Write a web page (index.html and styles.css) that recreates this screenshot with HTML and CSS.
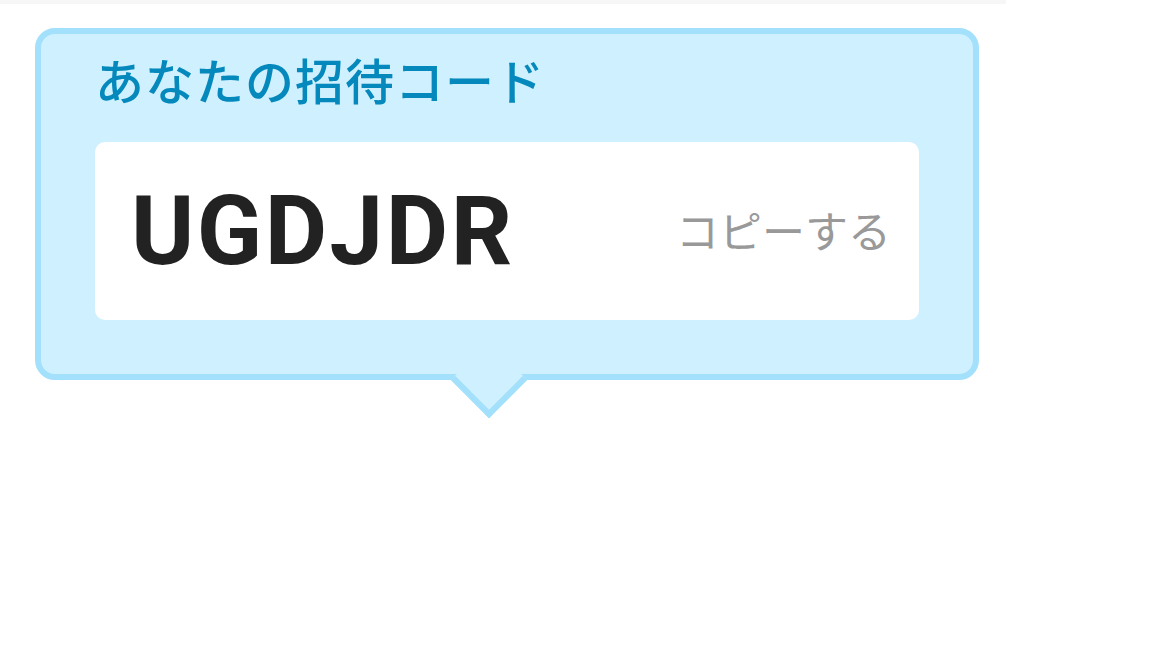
FILE: index.html
```html
<!DOCTYPE html>
<html lang="ja">
<head>
<meta charset="utf-8">
<link rel="stylesheet" href="styles.css">
</head>
<body>
<div class="topbar"></div>
<div class="bubble">
  <div class="title">あなたの招待コード</div>
  <div class="codebox">
    <span class="code">UGDJDR</span>
    <span class="copy">コピーする</span>
  </div>
</div>
</body>
</html>
```

FILE: styles.css
```css
html, body {
  margin: 0;
  padding: 0;
  background: #ffffff;
}
body {
  width: 1152px;
  height: 648px;
  overflow: hidden;
  font-family: "Noto Sans CJK JP", "Noto Sans", sans-serif;
}
.topbar {
  width: 1006px;
  height: 4px;
  background: #f6f6f6;
  margin-bottom: 24px;
}
.bubble {
  position: relative;
  box-sizing: border-box;
  width: 944px;
  height: 352px;
  margin-left: 35px;
  background: #cff0fe;
  border: 6px solid #a2e0fc;
  border-radius: 20px;
  padding: 17px 54px 54px 54px;
  display: flex;
  flex-direction: column;
}
.bubble::after {
  content: "";
  position: absolute;
  left: 448px;
  top: 346px;
  width: 54px;
  height: 54px;
  box-sizing: border-box;
  background: #cff0fe;
  border-right: 6px solid #a2e0fc;
  border-bottom: 6px solid #a2e0fc;
  transform: translate(-50%, -50%) rotate(45deg);
}
.title {
  font-size: 49px;
  line-height: 56px;
  font-weight: 500;
  color: #0589bd;
  letter-spacing: 1px;
}
.codebox {
  margin-top: 35px;
  height: 178px;
  background: #ffffff;
  border-radius: 10px;
  display: flex;
  align-items: center;
  justify-content: space-between;
  padding: 0 28px 0 36px;
}
.code {
  font-family: Roboto, "Liberation Sans", sans-serif;
  font-weight: 700;
  font-size: 96px;
  line-height: 1;
  color: #222222;
  letter-spacing: 2.5px;
}
.copy {
  font-size: 43px;
  line-height: 1;
  color: #999999;
  font-weight: 400;
  margin-top: -4px;
}
```
